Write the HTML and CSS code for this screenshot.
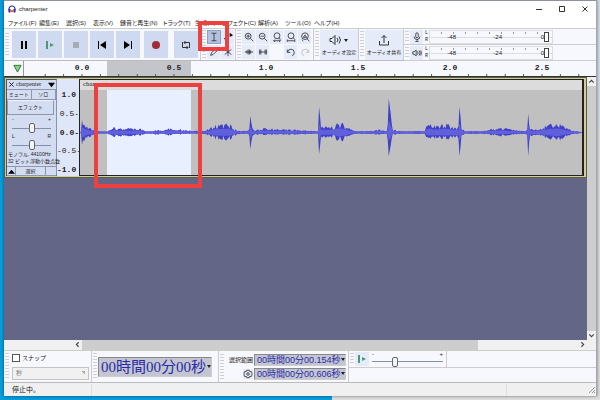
FILE: index.html
```
<!DOCTYPE html>
<html lang="ja">
<head>
    <meta charset="UTF-8">
    <meta name="viewport" content="width=device-width, initial-scale=1.0">
    <title>charpenter</title>
    <link rel="stylesheet" href="styles.css">
</head>
<body>

    <div class="window">
        <!-- Title bar -->
        <header class="titlebar">
            <svg class="logo" viewBox="0 0 16 16"><path d="M2 11V8a6 6 0 0 1 12 0v3" fill="none" stroke="#2330b8" stroke-width="2.4"/><rect x="1" y="8" width="4" height="7" rx="1" fill="#2330b8"/><rect x="11" y="8" width="4" height="7" rx="1" fill="#2330b8"/><path d="M4 12l2-4 2 5 2-5 2 4-2 2H6z" fill="#f58a1f"/><path d="M5 12h6" stroke="#e02a1c" stroke-width="2"/></svg>
            <span class="title">charpenter</span>
            <button class="win-btn" aria-label="最小化"><svg viewBox="0 0 8 8"><path d="M1 4.500h6"/></svg></button>
            <button class="win-btn" aria-label="最大化"><svg viewBox="0 0 8 8"><path d="M1.500 1.500h5v5h-5z"/></svg></button>
            <button class="win-btn" aria-label="閉じる"><svg viewBox="0 0 8 8"><path d="M1.500 1.500l5 5M6.500 1.500l-5 5"/></svg></button>
        </header>

        <nav class="menu">
            <a href="#">ファイル(F)</a>
            <a href="#">編集(E)</a>
            <a href="#">選択(S)</a>
            <a href="#">表示(V)</a>
            <a href="#">録音と再生(N)</a>
            <a href="#">トラック(T)</a>
            <a href="#">生成(G)</a>
            <a href="#">エフェクト(C)</a>
            <a href="#">解析(A)</a>
            <a href="#">ツール(O)</a>
            <a href="#">ヘルプ(H)</a>
        </nav>

        <!-- Toolbars -->
        <div class="toolbars">
            <div class="bar transport">
                <button aria-label="一時停止"><svg viewBox="0 0 12 12"><path d="M3 2h2v8H3zM7 2h2v8H7z"/></svg></button>
                <button aria-label="再生"><svg viewBox="0 0 12 12"><path d="M2 2h2v8H2zM6 4l4 2-4 2z" fill="#4b9877"/></svg></button>
                <button aria-label="停止"><svg viewBox="0 0 12 12"><path d="M3 3h6v6H3z" fill="#a5abb5"/></svg></button>
                <button aria-label="先頭へ"><svg viewBox="0 0 12 12"><path d="M2 2h1v8H2zM10 2v8L4 6z"/></svg></button>
                <button aria-label="末尾へ"><svg viewBox="0 0 12 12"><path d="M9 2h1v8H9zM2 2v8l6-4z"/></svg></button>
                <button class="record" aria-label="録音"><svg viewBox="0 0 12 12"><circle cx="6" cy="6" r="4" fill="#a02c35"/></svg></button>
                <button class="loop" aria-label="ループ"><svg class="line" viewBox="0 0 12 12"><path d="M4 3.500h5.500V9M8 8.500H2.500V3M5.500 2L4 3.500 5.500 5M6.500 7L8 8.500 6.500 10"/></svg></button>
            </div>

            <div class="bar tools">
                <button class="active" aria-label="選択ツール"><svg class="line" viewBox="0 0 12 12"><path d="M3 1.500h6M3 10.500h6M6 1.500v9"/></svg></button>
                <button aria-label="エンベロープ"><svg viewBox="0 0 12 12"><path d="M8 1l4 3-4 2zM4 6v4L1 8z"/></svg></button>
                <button aria-label="描画ツール"><svg class="line" viewBox="0 0 12 12"><path d="M2 10l1-3 5-5 2 2-5 5zM7 3l2 2"/></svg></button>
                <button aria-label="マルチツール"><svg class="line" viewBox="0 0 12 12"><path d="M6 1v10M2 3l8 6M10 3L2 9"/></svg></button>
            </div>

            <div class="bar zoom">
                <button aria-label="拡大"><svg class="line" viewBox="0 0 12 12"><circle cx="5" cy="5" r="3.500"/><path d="M7.500 7.500L11 11M3 5h4M5 3v4"/></svg></button>
                <button aria-label="縮小"><svg class="line" viewBox="0 0 12 12"><circle cx="5" cy="5" r="3.500"/><path d="M7.500 7.500L11 11M3 5h4"/></svg></button>
                <button aria-label="選択範囲に合わせる"><svg class="line" viewBox="0 0 12 12"><circle cx="6" cy="4.500" r="3.500"/><path d="M8.500 7l2 2M2 10.500h8M3.500 9L2 10.500 3.500 12M8.500 9L10 10.500 8.500 12"/></svg></button>
                <button aria-label="全体を表示"><svg class="line" viewBox="0 0 12 12"><circle cx="6" cy="4.500" r="3.500"/><path d="M8.500 7l2 2M2 10.500h8M1.500 9v3M10.500 9v3"/></svg></button>
                <button aria-label="ズーム切替"><svg class="line" viewBox="0 0 12 12"><circle cx="6" cy="5" r="4"/><path d="M8.500 8L11 11M4 6.500l2-3 2 3zM2 9l2 2"/></svg></button>
                <button aria-label="トリム"><svg class="line" viewBox="0 0 12 12"><path d="M1 6h10M3.500 4v4M5 3v6M6.500 3v6M8 4v4"/></svg></button>
                <button aria-label="無音化"><svg class="line" viewBox="0 0 12 12"><path d="M2 3v6M3.500 3v6M1 6h10M8.500 3v6M10 3v6"/></svg></button>
                <span></span>
                <button aria-label="元に戻す"><svg class="line" viewBox="0 0 12 12"><path d="M1.500 3v3.500H5M2 6a4 4 0 1 1 5 4.500"/></svg></button>
                <button aria-label="やり直す" disabled><svg class="line" viewBox="0 0 12 12"><path d="M10.500 3v3.500H7M10 6a4 4 0 1 0-5 4.500"/></svg></button>
            </div>

            <div class="bar wide">
                <button>
                    <svg class="line" viewBox="0 0 20 12"><path d="M1 4.500h2l3-3v9l-3-3H1zM8 4q2 2 0 4M10 2.500q3 3.500 0 7"/><path d="M15 5h4l-2 3z" fill="#222" stroke="none"/></svg>
                    <span>オーディオ設定</span>
                </button>
            </div>
            <div class="bar wide">
                <button>
                    <svg class="line" viewBox="0 0 20 12"><path d="M5.500 7v4h9V7M10 9V1.500M7.500 4L10 1.500 12.500 4"/></svg>
                    <span>オーディオ共有</span>
                </button>
            </div>

            <div class="meters">
                <div class="meter">
                    <button aria-label="録音メーター"><svg class="line" viewBox="0 0 12 12"><rect x="4.500" y="1" width="3" height="6" rx="1.500"/><path d="M2.500 5.500a3.500 3.500 0 0 0 7 0M6 9v2M4 11.500h4"/></svg></button>
                    <span class="channels"><i>L</i><i>R</i></span>
                    <div class="scale"><span>-48</span><span>-24</span><span>0</span><b></b></div>
                </div>
                <div class="meter">
                    <button aria-label="再生メーター"><svg class="line" viewBox="0 0 12 12"><path d="M1 4.500h1.500L5 2.500v7L2.500 7.500H1zM6.500 4q2 2 0 4M8.500 3q2.500 3 0 6M10.500 3q1.500 3 0 6"/></svg></button>
                    <span class="channels"><i>L</i><i>R</i></span>
                    <div class="scale"><span>-48</span><span>-24</span><span>0</span><b></b></div>
                </div>
            </div>
        </div>

        <!-- Timeline -->
        <div class="timeline">
            <button class="pin" aria-label="再生ヘッド固定"><svg viewBox="0 0 10 10"><path d="M1 1.500h8L5 9z" fill="#7fd87a" stroke="#2f6a35"/></svg></button>
            <div class="ruler">
                <span>0.0</span><span>0.5</span><span>1.0</span><span>1.5</span><span>2.0</span><span>2.5</span>
            </div>
        </div>

        <main class="project">
            <div class="tracks">
                <section class="track">
                    <div class="panel">
                        <div class="panel-head">
                            <button aria-label="トラックを閉じる"><svg viewBox="0 0 8 8"><path d="M1.500 1.500l5 5M6.500 1.500l-5 5" stroke="#111"/></svg></button>
                            <span>charpenter</span>
                            <button aria-label="トラックメニュー"><svg viewBox="0 0 8 8"><path d="M0 2h8L4 7z"/></svg></button>
                        </div>
                        <div class="mute-solo"><button>ミュート</button><button>ソロ</button></div>
                        <button class="effects">エフェクト</button>
                        <div class="knob"><span>-</span><span>+</span><input type="range" aria-label="ゲイン"></div>
                        <div class="knob"><span>L</span><span>R</span><input type="range" aria-label="パン"></div>
                        <p class="format">モノラル, 44100Hz<br>32 ビット浮動小数点数</p>
                        <div class="panel-foot">
                            <button aria-label="折りたたむ"><svg viewBox="0 0 8 8"><path d="M0 6.500h8L4 2z"/></svg></button>
                            <button>選択</button>
                        </div>
                    </div>
                    <div class="amplitude"><b>1.0</b><span>0.5-</span><b>0.0-</b><span>-0.5-</span><b>-1.0</b></div>
                    <div class="clip">
                        <div class="clip-name">charpenter</div>
                        <svg class="wave" viewBox="0 0 504 84" preserveAspectRatio="none">
                            <path id="wave-peak" fill="#4040c8"/>
                            <path id="wave-rms" fill="#6060dc"/>
                        </svg>
                    </div>
                </section>
                <div class="note note-clip"></div>
            </div>
            <div class="vscroll">
                <svg viewBox="0 0 8 8"><path d="M2 5l2-2 2 2"/></svg>
                <svg viewBox="0 0 8 8"><path d="M2 3l2 2 2-2"/></svg>
            </div>
        </main>
        <div class="hscroll">
            <svg viewBox="0 0 8 8"><path d="M5 2L3 4l2 2"/></svg>
            <div class="hthumb"></div>
            <svg viewBox="0 0 8 8"><path d="M3 2l2 2-2 2"/></svg>
        </div>

        <!-- Bottom toolbars -->
        <div class="bottom">
            <div class="bar snap">
                <label><input type="checkbox">スナップ</label>
                <select disabled aria-label="スナップ単位"><option>秒</option></select>
            </div>
            <div class="bar position">
                <div class="time big">00時間00分00秒</div>
            </div>
            <div class="bar selection">
                <span>選択範囲</span>
                <div class="time">00時間00分00.154秒</div>
                <button aria-label="選択範囲の設定"><svg class="line" viewBox="0 0 12 12"><circle cx="6" cy="6" r="1.500"/><path d="M4.500 1.500h3l.5 1.700 2-.2 1 2-1 1 1 1-1 2-2-.2-.5 1.700h-3L4 8.800l-2 .2-1-2 1-1-1-1 1-2 2 .2z"/></svg></button>
                <div class="time">00時間00分00.606秒</div>
            </div>
            <div class="speed-area">
                <div class="bar speed">
                    <button aria-label="指定速度で再生"><svg viewBox="0 0 12 12"><path d="M2 2h2v8H2zM6 4l4 2-4 2z" fill="#4b9877"/></svg></button>
                    <div class="knob"><span>-</span><span>+</span><input type="range" value="30" aria-label="再生速度"></div>
                </div>
            </div>
        </div>

        <footer class="status">
            <span>停止中。</span><span></span><span></span>
            <svg viewBox="0 0 8 8"><path d="M1 7l6-6M4 7l3-3M6 7l1-1" stroke="#999"/></svg>
        </footer>

        <div class="note note-tool"></div>
    </div>

    <script src="script.js"></script>
</body>
</html>
```
FILE: styles.css
```
* {
    box-sizing: border-box;
}

body {
    margin: 0;
    min-height: 100vh;
    padding: 0 3px 4px 4px;
    display: flex;
    font-family: "Liberation Sans", "Noto Sans CJK JP", sans-serif;
    font-size: 6px;
    line-height: 8px;
    color: #222;
    background: linear-gradient(#cfe0ea, #cfe0ea) 100% 0 / 4px 126px no-repeat, linear-gradient(90deg, #0a9ddb 332px, #dedede 332px);
}

button {
    display: flex;
    align-items: center;
    justify-content: center;
    padding: 0;
    border: 0;
    font: inherit;
    color: inherit;
    background: none;
}

svg {
    display: block;
    width: 12px;
    height: 12px;
    flex: none;
}

.line {
    fill: none;
    stroke: #333;
}

.window {
    position: relative;
    flex: 1;
    min-width: 0;
    display: flex;
    flex-direction: column;
    background: #fff;
    border-top: 1px solid #8c9298;
    border-right: 1px solid #a4a8ac;
    box-shadow: 0 0 3px rgba(0, 0, 0, 0.5);
}

/* Title and menu */
.titlebar {
    display: flex;
    align-items: center;
    height: 16px;
    padding-left: 4px;
}

.logo {
    width: 8px;
    height: 8px;
}

.title {
    flex: 1;
    padding-left: 3px;
}

.win-btn {
    width: 23px;
    height: 14px;
}

.win-btn svg {
    width: 8px;
    height: 8px;
    fill: none;
    stroke: #333;
}

.menu {
    display: grid;
    grid-template-columns: 31px 27px 27px 27px 43px 32px 27px 36px 27px 29px 24px;
    height: 11px;
    padding-left: 4px;
    align-items: center;
    font-feature-settings: "palt";
}

.menu a {
    color: #222;
    text-decoration: none;
    white-space: nowrap;
}

/* Toolbars */
.toolbars {
    display: flex;
    height: 33px;
    background: #f7f8fd;
    border-top: 1px solid #ccc;
    border-bottom: 1px solid #bbb;
}

.bar {
    display: flex;
    align-items: center;
    border-right: 1px solid #ccc;
}

.bar::before,
.meter::before {
    content: "";
    flex: none;
    align-self: stretch;
    width: 4px;
    margin: 2px 1px;
    background: repeating-linear-gradient(#cfd0d6 0 1px, #f7f8fd 1px 3px);
}

.bar button {
    background: #e6ebf9;
}

.transport {
    gap: 2px;
    padding: 2px 2px 2px 0;
}

.transport button {
    width: 24px;
    height: 27px;
    background: #cfdaf1;
}

.transport .record {
    margin-left: 2px;
}

.transport .loop {
    margin-left: 4px;
}

.tools,
.zoom {
    display: grid;
    grid-template-columns: 6px 14px 14px;
    grid-template-rows: 14px 14px;
    align-content: center;
    gap: 1px 0;
}

.tools::before,
.zoom::before {
    grid-row: 1 / 3;
    margin: 0 1px;
}

.zoom {
    grid-template-columns: 6px repeat(5, 14px);
    padding-right: 1px;
}

.tools button,
.zoom button {
    height: 14px;
    border-right: 1px solid #f7f8fd;
}

.tools svg,
.zoom svg {
    width: 10px;
    height: 10px;
}

.tools .active {
    background: #b4c2df;
    border: 1px solid #8da0c6;
}

button:disabled {
    opacity: 0.3;
}

.wide button {
    flex-direction: column;
    gap: 2px;
    width: 38px;
    height: 30px;
    font-size: 5px;
    white-space: nowrap;
}

.wide svg {
    width: 20px;
}

.meters {
    flex: 1;
}

.meter {
    display: flex;
    align-items: center;
    height: 16px;
    border-bottom: 1px solid #ccc;
}

.meter button {
    width: 13px;
    height: 14px;
    background: #e6ebf9;
}

.meter button svg {
    width: 10px;
    height: 10px;
}

.channels {
    display: grid;
    width: 6px;
    padding-left: 2px;
    font-family: "Liberation Mono", monospace;
    font-size: 5px;
    line-height: 7px;
}

.channels i {
    font-style: normal;
}

.scale {
    display: grid;
    grid-template-columns: 46px 46px 22px 5px;
    align-items: center;
    height: 14px;
    padding-right: 3px;
    border: 1px solid #ddd;
    background: linear-gradient(#ddd, #ddd) 0 6px / 100% 1px no-repeat, repeating-linear-gradient(90deg, transparent 0 11px, #999 11px 12px) 0 1px / 108px 2px no-repeat;
    text-align: right;
}

.scale span {
    padding-right: 20px;
}

.scale span:nth-child(3) {
    padding-right: 0;
}

.scale b {
    height: 10px;
    border: 1px solid #444;
    background: #fff;
}

/* Timeline */
.timeline {
    display: flex;
    height: 16px;
    background: #f7f8fd;
    border-bottom: 1px solid #333;
}

.pin {
    width: 20px;
    padding-left: 7px;
    border-right: 1px solid #999;
}

.pin svg {
    width: 9px;
    height: 9px;
}

.ruler {
    flex: 1;
    display: flex;
    padding: 0 8px 0 12px;
    background: linear-gradient(90deg, transparent 83px, #c4c5ca 83px 167px, transparent 167px);
    font: bold 8px/13px "Liberation Mono", monospace;
    text-align: center;
}

.ruler span {
    flex: 1;
    background: linear-gradient(90deg, transparent 48%, #555 48% 53%, transparent 53%) 0 100% / 20% 2px repeat-x;
}

/* Tracks */
.project {
    flex: 1;
    display: flex;
    background: #646687;
}

.tracks {
    position: relative;
    flex: 1;
    min-width: 0;
}

.track {
    display: flex;
    height: 101px;
    padding: 1px;
    border: 1px solid #5c5d42;
    background: #cfce9a;
}

.panel {
    position: relative;
    width: 51px;
    flex: none;
    background: #d3dcf1;
    border: 1px solid #4c5364;
    border-right-color: #8792ab;
    font-size: 5px;
    line-height: 7px;
}

.panel svg {
    width: 7px;
    height: 7px;
}

.panel-head,
.mute-solo,
.panel-foot {
    display: flex;
    align-items: center;
    height: 10px;
    border-bottom: 1px solid #8d98b0;
}

.panel-head button {
    width: 9px;
}

.panel-head span {
    flex: 1;
    font-family: "Liberation Serif", serif;
    font-size: 6px;
}

.mute-solo button {
    flex: 1;
    height: 9px;
    border-right: 1px solid #8d98b0;
}

.effects {
    width: 47px;
    height: 15px;
    border: 1px solid #8d98b0;
    border-top-color: #eef2fc;
    margin-bottom: 2px;
}

.knob {
    display: grid;
    grid-template-columns: 1fr 1fr;
    height: 17px;
    padding: 0 5px;
    line-height: 5px;
}

.knob span:nth-child(2) {
    text-align: right;
}

.knob input {
    grid-column: 1 / 3;
    width: 100%;
    height: 10px;
    margin: 0;
    appearance: none;
    background: linear-gradient(#8590a8, #8590a8) 0 50% / 100% 1px no-repeat;
}

.knob input::-webkit-slider-thumb {
    appearance: none;
    width: 6px;
    height: 10px;
    border: 1px solid #666;
    border-radius: 2px;
    background: #f4f5fa;
}

.format {
    margin: 0 0 0 1px;
    height: 15px;
    white-space: nowrap;
}

.panel-foot {
    border-top: 1px solid #8d98b0;
}

.panel-foot button {
    width: 30px;
    height: 9px;
    border-right: 1px solid #8d98b0;
}

.panel-foot button:first-child {
    width: 9px;
}

.amplitude {
    width: 22px;
    flex: none;
    display: flex;
    flex-direction: column;
    justify-content: space-between;
    padding: 11px 0 2px;
    background: #dfe6f7;
    font: 8px/9px "Liberation Mono", monospace;
    text-align: right;
    white-space: nowrap;
}

.amplitude b:first-child,
.amplitude b:last-child {
    padding-right: 3px;
}

.clip {
    flex: 1;
    min-width: 0;
    display: flex;
    flex-direction: column;
    margin-right: 1px;
    border: 1px solid #222;
    border-right-width: 2px;
    background: #c0c0c0;
}

.clip-name {
    height: 10px;
    padding-left: 3px;
    background: #dcdcdc;
    font: 7px/9px "Liberation Serif", serif;
}

.wave {
    width: 100%;
    height: auto;
    flex: 1;
    min-height: 0;
    background: linear-gradient(90deg, transparent 27px, #e8f0ff 27px 111px, transparent 111px);
}

/* Scrollbars */
.vscroll {
    width: 9px;
    display: flex;
    flex-direction: column;
    justify-content: space-between;
    background: #cdcdcd;
}

.vscroll svg,
.hscroll svg {
    width: 9px;
    height: 9px;
    background: #f0f0f0;
    fill: none;
    stroke: #444;
}

.hscroll {
    display: flex;
    height: 10px;
    padding: 0 9px 0 69px;
    background: #f0f0f0;
}

.hthumb {
    width: 77%;
    margin-right: auto;
    background: #cdcdcd;
}

/* Bottom toolbars */
.bottom {
    display: flex;
    height: 33px;
    background: #f7f8fd;
    border-top: 1px solid #ccc;
    border-bottom: 1px solid #bbb;
}

.snap {
    display: grid;
    grid-template-columns: 6px 78px;
    gap: 0 2px;
    width: 88px;
}

.snap::before {
    grid-row: 1 / 3;
}

.snap label {
    display: flex;
    align-items: center;
    gap: 2px;
    font-size: 6px;
}

.snap input {
    appearance: none;
    width: 8px;
    height: 8px;
    margin: 0;
    border: 1px solid #555;
    background: #fff;
}

.snap select {
    height: 13px;
    width: 77px;
    padding: 0 3px;
    appearance: none;
    border: 1px solid #c4c4c4;
    border-radius: 0;
    font: inherit;
    color: #777;
    opacity: 1;
    background: linear-gradient(45deg, transparent 50%, #aaa 50%) 68px 3px / 4px 4px no-repeat, #f1f1f1;
}

.position {
    padding-right: 6px;
}

.time {
    display: flex;
    align-items: center;
    height: 12px;
    padding-left: 2px;
    border: 1px solid #888;
    border-right-color: #ccc;
    border-bottom-color: #ccc;
    background: #c3c6d0;
    color: #2a2aa8;
    font: 9px/10px "Liberation Sans", "Noto Sans CJK JP", sans-serif;
    white-space: nowrap;
}

.time::after {
    content: "";
    margin-left: auto;
    border: 2px solid transparent;
    border-top: 3px solid #222;
    border-bottom: 0;
}

.big {
    width: 114px;
    height: 20px;
    font: 15px/18px "Liberation Serif", "Noto Sans CJK JP", serif;
}

.selection {
    display: grid;
    grid-template-columns: 6px 27px 92px;
    gap: 2px 1px;
    align-content: center;
    justify-items: end;
    padding-right: 2px;
}

.selection::before {
    grid-row: 1 / 3;
    margin: 0 1px;
    align-self: stretch;
}

.selection svg {
    width: 10px;
    height: 10px;
}

.selection .time {
    width: 92px;
}

.speed-area {
    flex: 1;
}

.speed {
    width: 98px;
    height: 16px;
}

.speed-area::after {
    content: "";
    display: block;
    border-top: 1px solid #ccc;
}

.speed button {
    width: 14px;
    height: 14px;
}

.speed .knob {
    flex: 1;
    height: 15px;
    padding: 0 3px;
}

.status {
    display: grid;
    grid-template-columns: 88px 1fr 81px 8px;
    height: 13px;
    align-items: center;
    background: #f0f0f0;
    font-size: 7px;
}

.status span {
    height: 12px;
    padding-left: 8px;
    border-right: 1px solid #ddd;
    line-height: 12px;
}

.status span:nth-child(3) {
    border: 0;
}

.status svg {
    width: 8px;
    height: 8px;
}

/* Red highlight frames */
.note {
    position: absolute;
    border: 4px solid #ee4041;
    pointer-events: none;
}

.note-tool {
    left: 194px;
    top: 20px;
    width: 31px;
    height: 30px;
}

.note-clip {
    left: 90px;
    top: 6px;
    width: 108px;
    height: 105px;
}
```
FILE: script.js
```
// Envelope of the clip: [x, height above zero, height below zero]
const envelope = [
    [0, 0, 0], [1, 1, 1], [2, 12, 12], [4, 10, 11], [6, 7, 6], [9, 5, 5], [13, 2, 2], [17, 1, 1],
    [28, 1, 1], [30, 5, 4], [32, 3, 3], [35, 7, 6], [38, 4, 4], [60, 4, 3], [65, 1, 1], [70, 1, 1],
    [75, 2, 2], [82, 2, 1], [88, 4, 3], [96, 4, 2], [110, 2, 1], [124, 1, 1], [130, 4, 3],
    [135, 8, 7], [150, 9, 8], [155, 3, 3], [161, 1, 1], [168, 2, 1], [170, 3, 3], [171, 16, 16],
    [173, 5, 4], [175, 2, 2], [186, 4, 2], [210, 3, 2], [239, 1, 1], [240, 25, 21], [242, 6, 5],
    [246, 6, 5], [254, 6, 5], [258, 10, 9], [266, 9, 8], [271, 4, 3], [276, 1, 1], [295, 1, 1],
    [300, 3, 2], [308, 1, 1], [309, 8, 8], [310, 33, 23], [312, 18, 12], [314, 3, 2], [320, 1, 1],
    [346, 1, 1], [348, 7, 5], [351, 10, 7], [355, 7, 6], [368, 9, 7], [375, 6, 6], [380, 6, 6],
    [381, 25, 23], [383, 6, 5], [386, 1, 1], [405, 1, 1], [410, 3, 2], [422, 5, 4], [432, 3, 2],
    [445, 1, 1], [449, 2, 2], [450, 18, 23], [452, 4, 4], [455, 3, 3], [464, 5, 4], [472, 9, 7],
    [480, 10, 9], [488, 5, 4], [497, 1, 1], [504, 0, 0]
];

const middle = 42;

function heightAt(x, side) {
    let i = 1;
    while (envelope[i][0] < x) i++;
    const a = envelope[i - 1];
    const b = envelope[i];
    const t = (x - a[0]) / (b[0] - a[0]);
    return a[side] + (b[side] - a[side]) * t;
}

function wavePath(scale, noise) {
    let top = '';
    let bottom = '';
    for (let x = 1; x <= 504; x++) {
        const r = Math.abs(Math.sin(x * 12.9898) * 43758.5453) % 1;
        const up = heightAt(x, 1);
        const down = heightAt(x, 2);
        const k = up > 12 ? 1 : 1 - noise * r;
        top += `L${x} ${(middle - 0.5 - up * k * scale).toFixed(1)}`;
        bottom = `L${x} ${(middle + 0.5 + down * k * scale).toFixed(1)}` + bottom;
    }
    return `M0 ${middle}${top}${bottom}Z`;
}

document.getElementById('wave-peak').setAttribute('d', wavePath(1, 0.7));
document.getElementById('wave-rms').setAttribute('d', wavePath(0.35, 0));
```
